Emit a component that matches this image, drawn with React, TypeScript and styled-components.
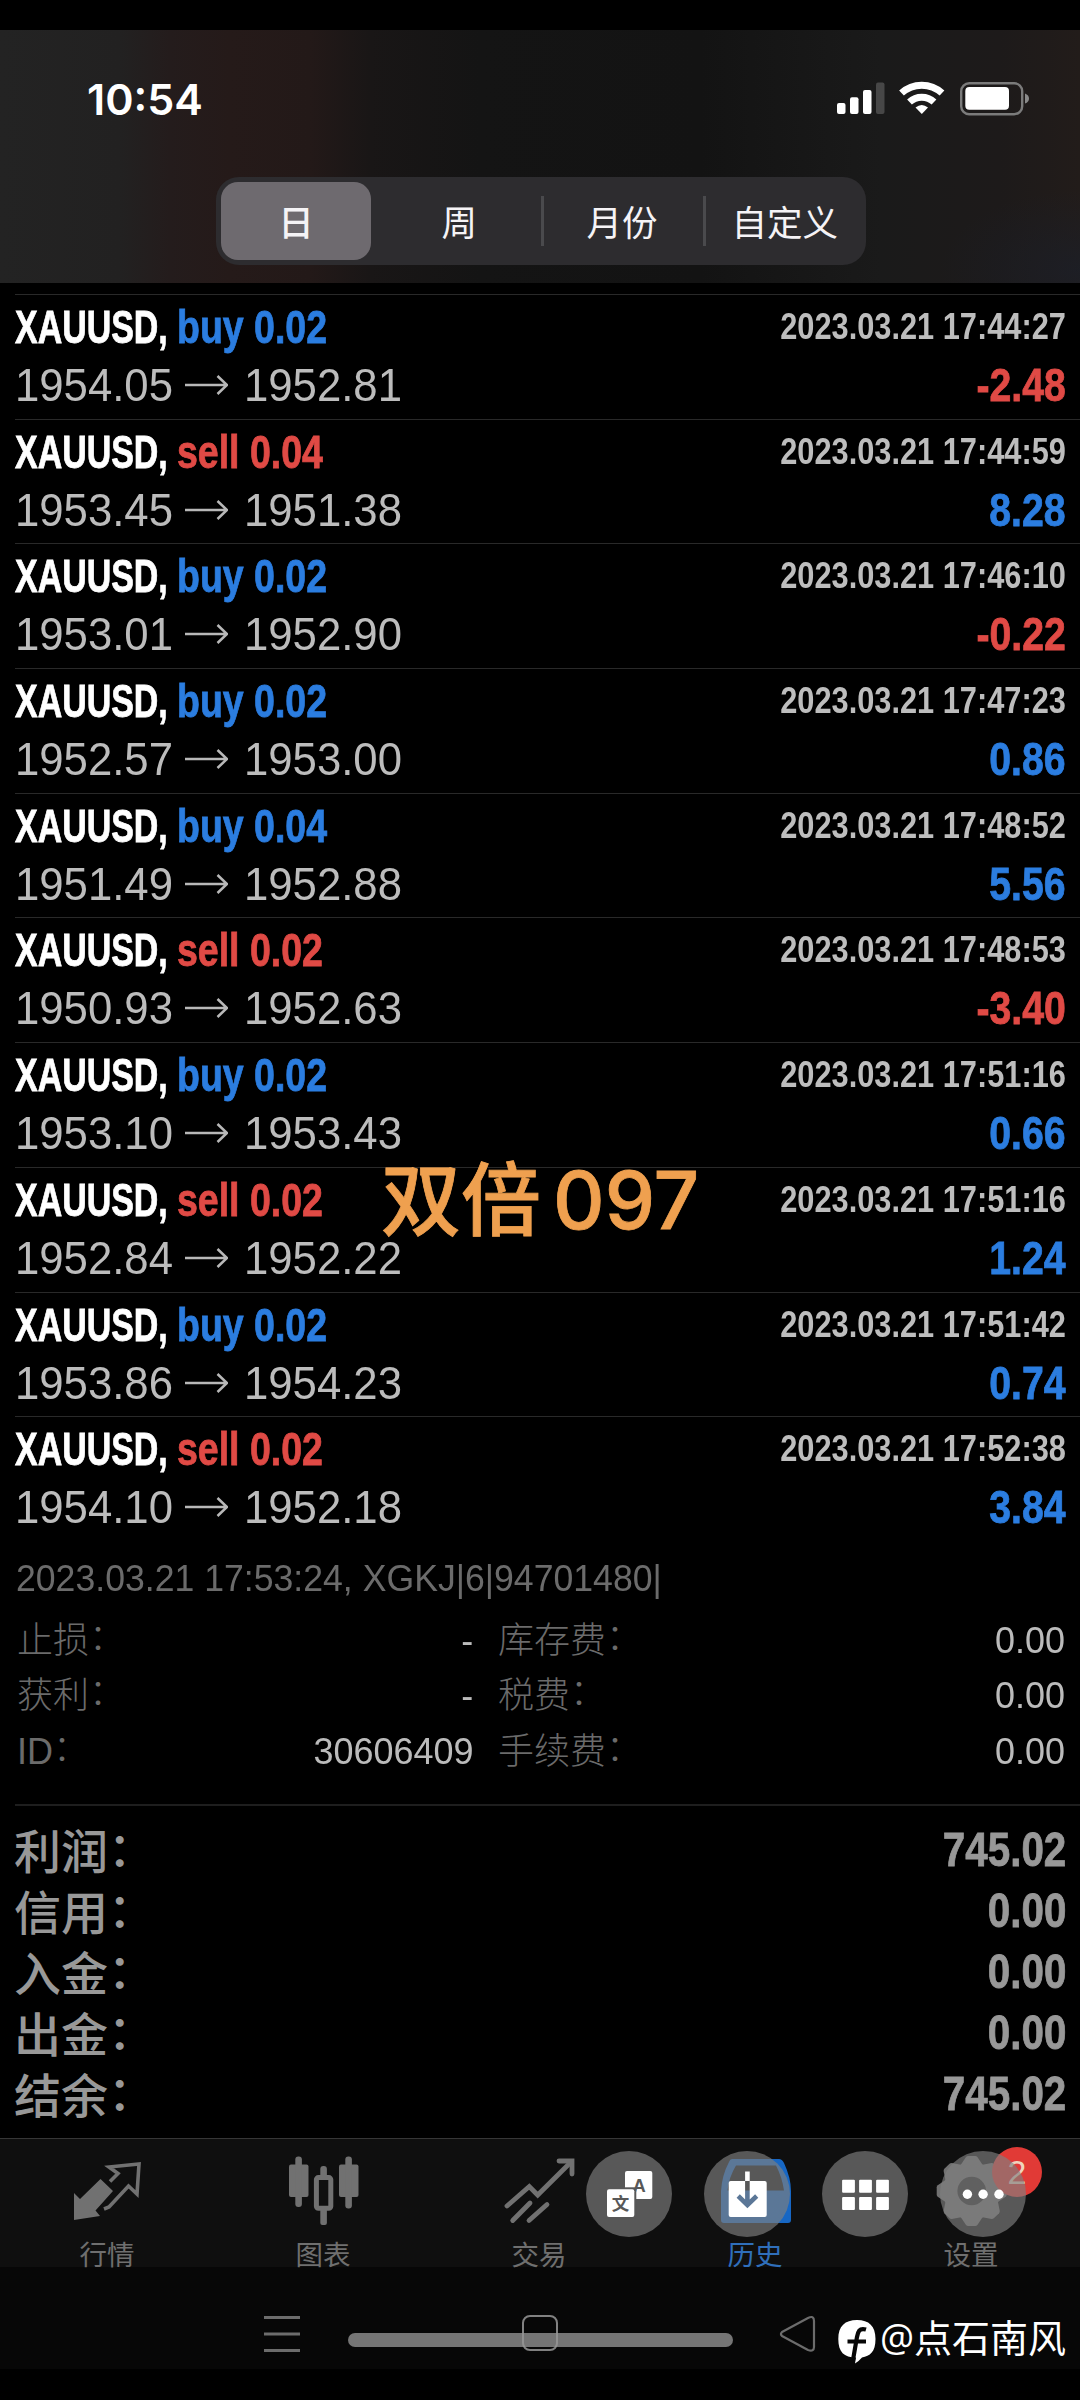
import React from "react";
import styled, { createGlobalStyle } from "styled-components";

const BLUE = "#2b7de0";
const RED = "#e04a45";
const LATIN = '"Liberation Sans", "Noto Sans CJK SC", sans-serif';
const CJK = '"Noto Sans CJK SC", sans-serif';

const GlobalStyle = createGlobalStyle`
  * { box-sizing: border-box; }
  body { margin: 0; background: #000; }
`;

const Screen = styled.main`
  position: relative;
  width: 1080px;
  height: 2400px;
  padding-top: 30px;
  display: flex;
  flex-direction: column;
  overflow: hidden;
  background: #000;
  font-family: ${LATIN};
`;

/* Text squeezed horizontally, anchored on the side it is aligned to. */
const Squeezed = styled.span<{ $k: number; $from?: "left" | "right"; $heavy?: boolean }>`
  display: inline-block;
  white-space: nowrap;
  transform: scaleX(${(p) => p.$k});
  transform-origin: ${(p) => p.$from ?? "left"} center;
  -webkit-text-stroke: ${(p) => (p.$heavy ? "0.8px currentColor" : "0")};
`;

/* ---------- header ---------- */

const Header = styled.header`
  height: 253px;
  flex: none;
  display: flex;
  flex-direction: column;
  align-items: center;
  background:
    radial-gradient(ellipse 140px 80px at 100% 95%, rgba(26, 32, 44, 0.6), transparent),
    linear-gradient(90deg, #232323 0, #222121 120px, #241c1c 170px, #251a19 230px, #231918 310px, #191616 370px, #141414 480px, #131313 700px, #1a1a1a 880px, #1d1a1a 1000px, #221c1a 1080px);
`;

const StatusBar = styled.div`
  width: 100%;
  height: 147px;
  padding: 0 50px 0 87px;
  display: flex;
  justify-content: space-between;
`;

const Clock = styled.time`
  margin-top: 43px;
  height: 52px;
  font: 600 43px/52px Inter, sans-serif;
  color: #fff;
`;

const StatusIcons = styled.svg`
  width: 194px;
  height: 36px;
  margin-top: 51px;
`;

const Segments = styled.nav`
  width: 650px;
  height: 88px;
  margin-left: 2px;
  padding: 5px 0;
  display: flex;
  align-items: center;
  border-radius: 23px;
  background: #2d2c2f;
`;

const Segment = styled.button<{ $active?: boolean; $rule?: boolean }>`
  width: ${(p) => (p.$active ? 150 : 163)}px;
  height: 78px;
  margin: ${(p) => (p.$active ? "0 7px 0 5px" : "0")};
  padding: 0;
  border: 0;
  border-radius: ${(p) => (p.$active ? "17px" : "0")};
  background: ${(p) =>
    p.$active
      ? "#6e6a6f"
      : p.$rule
        ? "linear-gradient(#4a4a4d, #4a4a4d) left center / 3px 50px no-repeat"
        : "transparent"};
  font: ${(p) => (p.$active ? 500 : 400)} 35.5px/76px ${CJK};
  color: #f5f3f6;
`;

/* ---------- deals ---------- */

const Deals = styled.ul`
  margin: 11px 0 0;
  padding: 0 0 0 15px;
  list-style: none;
`;

const Deal = styled.li`
  height: 124.7px;
  padding: 1px 14px 0 0;
  border-top: 1px solid #292929;
`;

const DealLine = styled.div<{ $h: number }>`
  height: ${(p) => p.$h}px;
  line-height: ${(p) => p.$h}px;
  display: flex;
  font-size: 46px;
`;

const SymbolName = styled.span`
  width: 162px;
  flex: none;
  font-weight: 700;
  color: #fff;
`;

const Side = styled.span<{ $c: string }>`
  flex: 1;
  font-weight: 700;
  color: ${(p) => p.$c};
`;

const Stamp = styled.time`
  line-height: 61px;
  font-size: 36.5px;
  font-weight: 700;
  color: #bdbdbd;
`;

const Price = styled.span<{ $w: number }>`
  width: ${(p) => p.$w}px;
  flex: none;
  color: #bcbcbc;
`;

const ArrowIcon = styled.svg`
  width: 44px;
  height: 22px;
  margin: 16px 16px 0 0;
  flex: none;
`;

const Profit = styled.span<{ $c: string }>`
  margin-left: auto;
  font-weight: 700;
  color: ${(p) => p.$c};
`;

/* ---------- expanded deal ---------- */

const Detail = styled.section`
  height: 265px;
  flex: none;
  margin-left: 15px;
  padding: 17px 15px 0 1px;
  border-bottom: 2px solid #1e1e1e;
  font-size: 36.5px;
  color: #6b6b6b;
`;

const Comment = styled.p`
  margin: 0;
  height: 55px;
  line-height: 42px;
`;

const DetailGrid = styled.dl`
  margin: 0;
  display: grid;
  grid-template-columns: 160px 297px 160px 1fr;
  grid-auto-rows: 55.5px;
  line-height: 55.5px;
`;

const Term = styled.dt<{ $inset?: boolean }>`
  margin: 0;
  padding-left: ${(p) => (p.$inset ? 25 : 1)}px;
  font-family: "Liberation Sans", ${CJK};
  font-weight: 300;
  font-size: 36px;
  white-space: nowrap;
`;

const Colon = styled.span`
  position: relative;
  top: -3px;
`;

const Value = styled.dd`
  margin: 0;
  text-align: right;
  color: #bbb;
`;

/* ---------- totals ---------- */

const Totals = styled.section`
  height: 332px;
  flex: none;
  padding: 12px 14px 0 14px;
  color: #989898;
`;

const Total = styled.div`
  height: 61px;
  line-height: 63px;
  display: flex;
  justify-content: space-between;
`;

const TotalLabel = styled.span`
  font: 500 47px/61px ${CJK};
`;

const TotalValue = styled.span`
  font-size: 47.5px;
  font-weight: 700;
`;

/* ---------- bottom ---------- */

const TabBar = styled.nav`
  height: 129px;
  flex: none;
  display: flex;
  border-top: 1px solid #363636;
  background: #0f0f0f;
`;

const Tab = styled.a<{ $active?: boolean }>`
  position: relative;
  width: 216px;
  display: flex;
  flex-direction: column;
  align-items: center;
  color: ${(p) => (p.$active ? "#1767c4" : "#717171")};
`;

const TabIcon = styled.svg`
  width: 80px;
  height: 80px;
  flex: none;
  margin-top: 12px;
`;

const TabLabel = styled.span<{ $active?: boolean }>`
  margin-top: 7px;
  padding-right: 2px;
  font: 400 27.5px/30px ${CJK};
  color: ${(p) => (p.$active ? "#2f6fbb" : "#6f6f6f")};
`;

const Badge = styled.span`
  position: absolute;
  left: 128px;
  top: 8px;
  width: 50px;
  height: 50px;
  border-radius: 50%;
  background: #e13a36;
  color: #efd3bd;
  font: 400 34px/51px "Liberation Sans", sans-serif;
  text-align: center;
`;

const FloatingActions = styled.div`
  position: absolute;
  left: 586px;
  top: 2151px;
  display: flex;
  gap: 32px;
`;

const Action = styled.button`
  width: 86px;
  height: 86px;
  padding: 0;
  border: 0;
  border-radius: 50%;
  background: rgba(128, 128, 128, 0.65);
`;

const ActionIcon = styled.svg`
  display: block;
  width: 86px;
  height: 86px;
`;

const SystemBar = styled.footer`
  height: 102px;
  flex: none;
  padding: 45px 0 0 264px;
  display: flex;
  align-items: flex-start;
  background: #070707;
`;

const MenuLines = styled.svg`
  width: 36px;
  height: 44px;
`;

const HomeBar = styled.span`
  width: 385px;
  height: 14px;
  margin: 21px 46px 0 48px;
  display: flex;
  align-items: center;
  justify-content: center;
  border-radius: 7px;
  background: #757575;
`;

const HomeKey = styled.span`
  width: 36px;
  height: 36px;
  flex: none;
  margin: -14px 2px 0 0;
  border: 2px solid rgba(150, 150, 150, 0.85);
  border-radius: 8px;
`;

const BackKey = styled.svg`
  width: 38px;
  height: 44px;
`;

const Credit = styled.span`
  margin-left: 21px;
  display: flex;
  color: #fff;
  font: 400 38px/50px "Open Sans", ${CJK};
  white-space: nowrap;
`;

const CreditLogo = styled.svg`
  width: 38px;
  height: 46px;
  margin: 7px 4px 0 0;
`;

const Caption = styled.strong`
  position: absolute;
  left: 381px;
  top: 1150px;
  height: 100px;
  display: flex;
  gap: 12px;
  font: 500 80px/100px Inter, ${CJK};
  color: #efa04f;
  white-space: nowrap;
  -webkit-text-stroke: 0.8px #efa04f;
`;

type DealData = ["buy" | "sell", string, string, string, string, string];

const deals: DealData[] = [
  ["buy", "0.02", "1954.05", "1952.81", "17:44:27", "-2.48"],
  ["sell", "0.04", "1953.45", "1951.38", "17:44:59", "8.28"],
  ["buy", "0.02", "1953.01", "1952.90", "17:46:10", "-0.22"],
  ["buy", "0.02", "1952.57", "1953.00", "17:47:23", "0.86"],
  ["buy", "0.04", "1951.49", "1952.88", "17:48:52", "5.56"],
  ["sell", "0.02", "1950.93", "1952.63", "17:48:53", "-3.40"],
  ["buy", "0.02", "1953.10", "1953.43", "17:51:16", "0.66"],
  ["sell", "0.02", "1952.84", "1952.22", "17:51:16", "1.24"],
  ["buy", "0.02", "1953.86", "1954.23", "17:51:42", "0.74"],
  ["sell", "0.02", "1954.10", "1952.18", "17:52:38", "3.84"],
];

const details = [
  ["止损", "-", "库存费", "0.00"],
  ["获利", "-", "税费", "0.00"],
  ["ID", "30606409", "手续费", "0.00"],
];

const totals = [
  ["利润", "745.02"],
  ["信用", "0.00"],
  ["入金", "0.00"],
  ["出金", "0.00"],
  ["结余", "745.02"],
];

function DealRow({ deal }: { deal: DealData }) {
  const [side, lots, open, close, time, profit] = deal;
  return (
    <Deal>
      <DealLine $h={62}>
        <SymbolName>
          <Squeezed $k={0.738} $heavy>XAUUSD,</Squeezed>
        </SymbolName>
        <Side $c={side === "buy" ? BLUE : RED}>
          <Squeezed $k={0.815} $heavy>{`${side} ${lots}`}</Squeezed>
        </Side>
        <Stamp>
          <Squeezed $k={0.843} $from="right">{`2023.03.21 ${time}`}</Squeezed>
        </Stamp>
      </DealLine>
      <DealLine $h={55}>
        <Price $w={169}>
          <Squeezed $k={0.95}>{open}</Squeezed>
        </Price>
        <ArrowIcon viewBox="0 0 44 22" fill="none" stroke="#b8b8b8" strokeWidth="2.5">
          <path d="M1 11H43M33.5 2L43 11L33.5 20" />
        </ArrowIcon>
        <Price $w={169}>
          <Squeezed $k={0.95}>{close}</Squeezed>
        </Price>
        <Profit $c={profit.startsWith("-") ? RED : BLUE}>
          <Squeezed $k={0.853} $from="right" $heavy>{profit}</Squeezed>
        </Profit>
      </DealLine>
    </Deal>
  );
}

const gearTeeth = [0, 45, 90, 135, 180, 225, 270, 315];

export default function App() {
  return (
    <Screen>
      <GlobalStyle />
      <Header>
        <StatusBar>
          <Clock>10:54</Clock>
          <StatusIcons viewBox="836 81 194 36">
            <rect x="837" y="103" width="8.5" height="11" rx="2" fill="#fff" />
            <rect x="850" y="97.3" width="8.5" height="16.7" rx="2" fill="#fff" />
            <rect x="863" y="90" width="8.5" height="24" rx="2" fill="#fff" />
            <rect x="876" y="82.5" width="8.5" height="31.5" rx="2" fill="#474747" />
            <g fill="none" stroke="#fff" strokeWidth="7">
              <path d="M901.500 93A30 30 0 0 1 942 93" />
              <path d="M909.500 102A18 18 0 0 1 934 102" />
            </g>
            <path d="M915.500 107.500Q921.800 102.500 928 107.500L921.800 114Z" fill="#fff" />
            <rect x="961.200" y="83.200" width="61" height="31" rx="8" fill="none" stroke="#7b7b7b" strokeWidth="2.4" />
            <rect x="965.300" y="87" width="43.700" height="22.700" rx="4" fill="#fff" />
            <path d="M1025 93.500Q1029 95 1029 98.500T1025 103.500Z" fill="#8a8a8a" />
          </StatusIcons>
        </StatusBar>
        <Segments>
          <Segment $active>日</Segment>
          <Segment>周</Segment>
          <Segment $rule>月份</Segment>
          <Segment $rule>自定义</Segment>
        </Segments>
      </Header>

      <Deals>
        {deals.map((deal, i) => (
          <DealRow key={i} deal={deal} />
        ))}
      </Deals>

      <Detail>
        <Comment>
          <Squeezed $k={0.976}>2023.03.21 17:53:24, XGKJ|6|94701480|</Squeezed>
        </Comment>
        <DetailGrid>
          {details.map(([a, av, b, bv]) => (
            <React.Fragment key={a}>
              <Term>
                {a}
                <Colon>：</Colon>
              </Term>
              <Value>
                <Squeezed $k={0.985} $from="right">{av}</Squeezed>
              </Value>
              <Term $inset>
                {b}
                <Colon>：</Colon>
              </Term>
              <Value>
                <Squeezed $k={0.985} $from="right">{bv}</Squeezed>
              </Value>
            </React.Fragment>
          ))}
        </DetailGrid>
      </Detail>

      <Totals>
        {totals.map(([label, value]) => (
          <Total key={label}>
            <TotalLabel>
              {label}
              <Colon>：</Colon>
            </TotalLabel>
            <TotalValue>
              <Squeezed $k={0.85} $from="right" $heavy>{value}</Squeezed>
            </TotalValue>
          </Total>
        ))}
      </Totals>

      <TabBar>
        <Tab>
          <TabIcon viewBox="68 2151 80 80">
            <path d="M74 2193L80 2199L100.500 2179L113 2191L95.500 2210.500L100 2216L74 2220Z" fill="currentColor" />
            <path d="M110 2181.500L118 2173.500L109 2167L139 2164L137 2194L128.500 2186L109 2207L104 2209" fill="none" stroke="currentColor" strokeWidth="3.600" />
          </TabIcon>
          <TabLabel>行情</TabLabel>
        </Tab>
        <Tab>
          <TabIcon viewBox="284 2151 80 80" fill="currentColor">
            <rect x="289" y="2164.500" width="19.500" height="32.500" rx="2" />
            <rect x="295.300" y="2156.500" width="6.600" height="50.500" rx="3" />
            <rect x="339" y="2164.500" width="19.500" height="32.500" rx="2" />
            <rect x="345.300" y="2156.500" width="6.600" height="52" rx="3" />
            <rect x="320.300" y="2166" width="6.600" height="12" rx="3" />
            <rect x="320.300" y="2207" width="6.600" height="18" rx="2" />
            <rect x="316.400" y="2177.600" width="14.400" height="30.700" rx="2" fill="none" stroke="currentColor" strokeWidth="5" />
          </TabIcon>
          <TabLabel>图表</TabLabel>
        </Tab>
        <Tab>
          <TabIcon viewBox="500 2151 80 80" fill="none" stroke="currentColor" strokeWidth="4.800" strokeLinecap="round">
            <path d="M507 2206L529.300 2186.500L537.700 2195L571 2162" />
            <path d="M559 2161H572V2174" />
            <path d="M512.700 2220.500L530 2203M529 2220.500L547 2204.500" />
          </TabIcon>
          <TabLabel>交易</TabLabel>
        </Tab>
        <Tab $active>
          <TabIcon viewBox="716 2151 80 80">
            <path
              fillRule="evenodd"
              fill="currentColor"
              d="M732 2159H779Q782 2159 784 2163Q791 2178 791 2191V2220Q791 2223 788 2223H724Q721 2223 721 2220V2191Q722 2175 729 2162Q730 2159 732 2159ZM736 2165.500Q729 2177 727.500 2190.500H784Q782 2177 776 2165.500Z"
            />
          </TabIcon>
          <TabLabel $active>历史</TabLabel>
        </Tab>
        <Tab>
          <TabIcon viewBox="932 2151 80 80" fill="currentColor">
            <circle cx="971.700" cy="2191" r="28.500" />
            {gearTeeth.map((a) => (
              <path key={a} transform={`rotate(${a} 971.7 2191)`} d="M960 2166L966 2157Q967 2156 968 2156H975.400Q976.400 2156 977.400 2157L983.400 2166Z" />
            ))}
            <circle cx="971.700" cy="2191" r="14.300" fill="#262626" />
          </TabIcon>
          <TabLabel>设置</TabLabel>
          <Badge>2</Badge>
        </Tab>
      </TabBar>

      <SystemBar>
        <MenuLines viewBox="0 0 36 44" stroke="#6c6c6c" strokeWidth="3">
          <path d="M0 5.500H36M0 22H36M0 38.500H36" />
        </MenuLines>
        <HomeBar>
          <HomeKey />
        </HomeBar>
        <BackKey viewBox="779 2312 38 44" fill="none" stroke="#6c6c6c" strokeWidth="2.200" strokeLinejoin="round">
          <path d="M782 2332Q780 2334 782 2336L808 2350Q814 2352 814 2347V2321Q814 2315 808 2318Z" />
        </BackKey>
        <Credit>
          <CreditLogo viewBox="838 2319 38 46">
            <path
              fill="#fff"
              d="M857 2320C869 2320 875.500 2326 875.500 2339C875.500 2352 870 2356 862 2357.500Q859 2361 855 2363.500L856 2357.500C844 2357.500 838.300 2352 838.300 2339C838.300 2326 845 2320 857 2320Z"
            />
            <path d="M866 2329.500C859 2327.500 858 2332 857 2337L853 2360M847.500 2341.500H866" fill="none" stroke="#070707" strokeWidth="4.200" />
          </CreditLogo>
          @点石南风
        </Credit>
      </SystemBar>

      <FloatingActions>
        <Action>
          <ActionIcon viewBox="585.700 2151 86 86">
            <rect x="624.700" y="2171" width="27.300" height="28" rx="2" fill="#fff" />
            <text x="639" y="2191.500" fontSize="18" fontWeight="700" textAnchor="middle" fill="#585858" fontFamily="Liberation Sans, sans-serif">A</text>
            <rect x="604.700" y="2187.300" width="31.300" height="31" fill="#585858" />
            <rect x="606.700" y="2189.300" width="27.300" height="27.700" rx="2" fill="#fff" />
            <text x="620.300" y="2209.500" fontSize="17.500" fontWeight="700" textAnchor="middle" fill="#585858" fontFamily="Noto Sans CJK SC, sans-serif">文</text>
          </ActionIcon>
        </Action>
        <Action>
          <ActionIcon viewBox="704.300 2151 86 86">
            <mask id="arrow-cut" maskUnits="userSpaceOnUse" x="704" y="2151" width="86" height="86">
              <rect x="704" y="2151" width="86" height="86" fill="#fff" />
              <path d="M747.700 2181V2202M738.500 2196L747.700 2205L757 2196" fill="none" stroke="#000" strokeWidth="4.600" />
            </mask>
            <rect x="745.400" y="2171.500" width="4.600" height="9.500" fill="#fff" />
            <rect x="729" y="2181" width="38" height="36" rx="2" fill="#fff" mask="url(#arrow-cut)" />
          </ActionIcon>
        </Action>
        <Action>
          <ActionIcon viewBox="822.300 2151 86 86" fill="#fff">
            {[842.4, 859.4, 876.4].map((x) => (
              <React.Fragment key={x}>
                <rect x={x} y="2179.700" width="12.800" height="13" rx="1" />
                <rect x={x} y="2197" width="12.800" height="13" rx="1" />
              </React.Fragment>
            ))}
          </ActionIcon>
        </Action>
        <Action>
          <ActionIcon viewBox="940.300 2151 86 86" fill="#fff">
            <circle cx="967.700" cy="2194.300" r="4.700" />
            <circle cx="983.400" cy="2194.300" r="4.700" />
            <circle cx="999.300" cy="2194.300" r="4.700" />
          </ActionIcon>
        </Action>
      </FloatingActions>

      <Caption>
        <span>双倍</span>
        <span>097</span>
      </Caption>
    </Screen>
  );
}
